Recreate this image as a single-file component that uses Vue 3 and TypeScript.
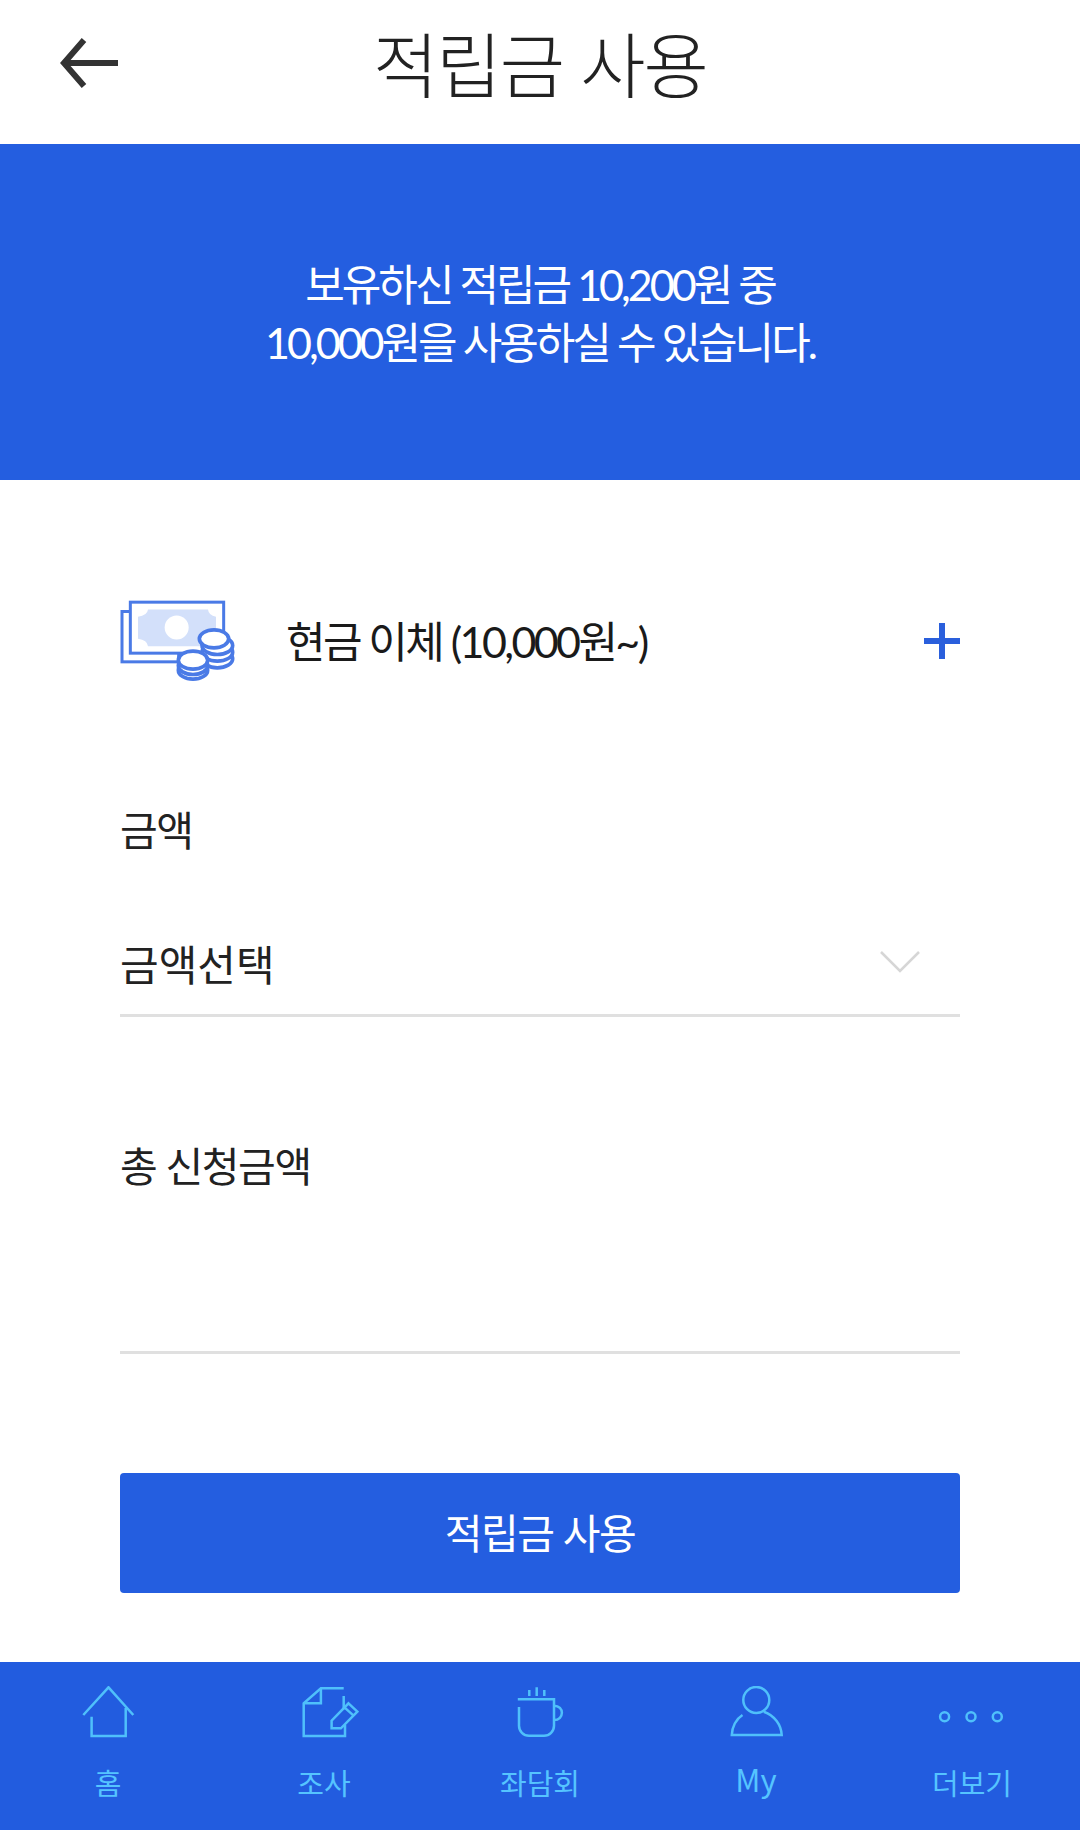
<template>
  <div class="page">
    <header class="top">
      <button class="back" aria-label="뒤로">
        <svg width="58" height="50" viewBox="0 0 58 50" fill="none" stroke="#333" stroke-width="6">
          <path d="M24 2 4 25l20 23" />
          <path d="M4 25h54" />
        </svg>
      </button>
      <h1>적립금 사용</h1>
    </header>

    <section class="banner">
      <p>보유하신 적립금 10,200원 중</p>
      <p>10,000원을 사용하실 수 있습니다.</p>
    </section>

    <main class="form">
      <div class="method">
        <svg class="money" width="115" height="82" viewBox="60 60 345 245">
          <rect x="66" y="94" width="170" height="151" fill="#fff" stroke="#4a7ae6" stroke-width="9" />
          <rect x="91" y="66" width="280" height="153" fill="#fff" stroke="#4a7ae6" stroke-width="9" />
          <path d="M144 88h180q2 18 24 22v66q-22 4-24 22H144q-2-18-30-22v-66q28-4 30-22Z" fill="#d3e0fa" />
          <circle cx="230" cy="142" r="36" fill="#fff" />
          <ellipse
            v-for="coin in coins"
            :key="coin.x + '-' + coin.y"
            :cx="coin.x"
            :cy="coin.y"
            :rx="coin.rx"
            ry="27"
            fill="#fff"
            stroke="#4a7ae6"
            stroke-width="11"
          />
        </svg>
        <span class="method-name">현금 이체 (10,000원~)</span>
        <span class="plus"></span>
      </div>

      <label class="label amount">금액</label>
      <div class="select">
        <span>금액선택</span>
        <svg width="40" height="22" viewBox="0 0 40 22" fill="none" stroke="#d6d6d6" stroke-width="2.5">
          <path d="M1 1l19 19L39 1" />
        </svg>
      </div>

      <label class="label total">총 신청금액</label>
      <div class="total-value"></div>

      <button class="submit"><span>적립금 사용</span></button>
    </main>

    <nav class="tabs">
      <a v-for="tab in tabs" :key="tab.label" class="tab">
        <svg width="70" height="56" viewBox="0 0 70 56" fill="none" stroke="#4fc0fb" stroke-width="2.5">
          <template v-if="tab.icon === 'home'">
            <path d="M10.3 29 35.5 1.3 60.3 29" />
            <path d="M18.6 30.7V50h34.1V22" />
          </template>
          <template v-else-if="tab.icon === 'survey'">
            <path d="M54.7 2.3H31.9L14.7 17.3V50H56V39" />
            <path d="M31.9 2.3v15H14.7" />
            <path d="M54.7 10v13.3" />
            <path d="M59.5 17.3l8.9 8.4-16.5 16.600h-9.300v-7.600ZM55.400 21.300l9.200 8.400" />
          </template>
          <template v-else-if="tab.icon === 'cup'">
            <path d="M12.800 13.300H49V39.700a10 10 0 0 1-10 10H24a10 10 0 0 1-10-10V21" />
            <path d="M24.300 4v6M31.700 1.300V10M39.300 4v6" />
            <path d="M49 19.700c10.500 0 10.500 14.300 0 14.300" />
          </template>
          <template v-else-if="tab.icon === 'person'">
            <circle cx="35.300" cy="14" r="13" />
            <path d="M21.500 29C15 33 11 41 10.800 49h49.900c-.500-10-7-19.500-17.900-23.300" />
          </template>
          <template v-else>
            <circle cx="7.600" cy="30.700" r="4.500" />
            <circle cx="34" cy="30.700" r="4.500" />
            <circle cx="60.300" cy="30.700" r="4.500" />
          </template>
        </svg>
        <span :class="{ latin: tab.label === 'My' }">{{ tab.label }}</span>
      </a>
    </nav>
  </div>
</template>

<script setup lang="ts">
interface Tab {
  label: string;
  icon: string;
}

const tabs: Tab[] = [
  { label: "홈", icon: "home" },
  { label: "조사", icon: "survey" },
  { label: "좌담회", icon: "cup" },
  { label: "My", icon: "person" },
  { label: "더보기", icon: "more" },
];

// bottom coin first so the stack overlaps upward
const coins = [
  { x: 352, y: 236, rx: 46 },
  { x: 352, y: 216, rx: 46 },
  { x: 352, y: 196, rx: 46 },
  { x: 342, y: 176, rx: 44 },
  { x: 279, y: 270, rx: 44 },
  { x: 279, y: 256, rx: 44 },
  { x: 279, y: 240, rx: 44 },
];
</script>

<style>
html,
body {
  margin: 0;
  background: #fff;
}
</style>

<style scoped>
.page {
  width: 1080px;
  height: 1830px;
  display: flex;
  flex-direction: column;
  font-family: "Lato", "Noto Sans CJK KR", sans-serif;
  color: #222;
  background: #fff;
}

.top {
  height: 144px;
  position: relative;
  display: flex;
  align-items: center;
  justify-content: center;
  padding-bottom: 22px;
  box-sizing: border-box;
}

.top h1 {
  margin: 0;
  font-size: 71px;
  font-weight: 300;
  letter-spacing: -2px;
  color: #222;
}

.back {
  position: absolute;
  left: 60px;
  top: 38px;
  padding: 0;
  border: 0;
  background: none;
  line-height: 0;
}

.banner {
  height: 336px;
  box-sizing: border-box;
  padding-top: 3px;
  background: #245ee0;
  color: #fff;
  display: flex;
  flex-direction: column;
  justify-content: center;
  align-items: center;
  font-size: 43px;
  letter-spacing: -3px;
  line-height: 58px;
}

.banner p {
  margin: 0;
}

.form {
  flex: 1;
  padding: 0 120px;
  display: flex;
  flex-direction: column;
}

.method {
  margin-top: 120px;
  height: 82px;
  display: flex;
  align-items: center;
}

.method-name {
  margin-left: 51px;
  margin-bottom: 4px;
  font-size: 43px;
  letter-spacing: -2.6px;
  color: #1a1a1a;
}

.plus {
  margin-left: auto;
  width: 36px;
  height: 36px;
  background:
    linear-gradient(#2a5fdc, #2a5fdc) center / 36px 6px no-repeat,
    linear-gradient(#2a5fdc, #2a5fdc) center / 6px 36px no-repeat;
}

.label {
  font-size: 41px;
  line-height: 50px;
  letter-spacing: -1.4px;
}

.amount {
  margin-top: 124px;
}

.select {
  margin-top: 84px;
  height: 74px;
  display: flex;
  justify-content: space-between;
  align-items: flex-start;
  border-bottom: 3px solid #e0e0e0;
  font-size: 42px;
  line-height: 50px;
}

.select svg {
  margin: 11px 40px 0 0;
}

.total {
  margin-top: 125px;
}

.total-value {
  height: 159px;
  border-bottom: 3px solid #e0e0e0;
}

.submit {
  margin-top: 119px;
  height: 120px;
  padding: 0 0 4px;
  border: 0;
  border-radius: 4px;
  background: #245ee0;
  color: #fff;
  font-family: inherit;
  font-size: 41px;
  letter-spacing: -1.4px;
}

.tabs {
  height: 168px;
  background: #225cdf;
  display: grid;
  grid-template-columns: repeat(5, 1fr);
}

.tab {
  display: flex;
  flex-direction: column;
  align-items: center;
  padding-top: 24px;
  color: #55c4ff;
  font-size: 29px;
  font-family: "Noto Sans CJK KR", sans-serif;
}

.tab span {
  margin-top: 20px;
  line-height: 40px;
}

.tab span.latin {
  margin-top: 17px;
  font-size: 31px;
}
</style>
